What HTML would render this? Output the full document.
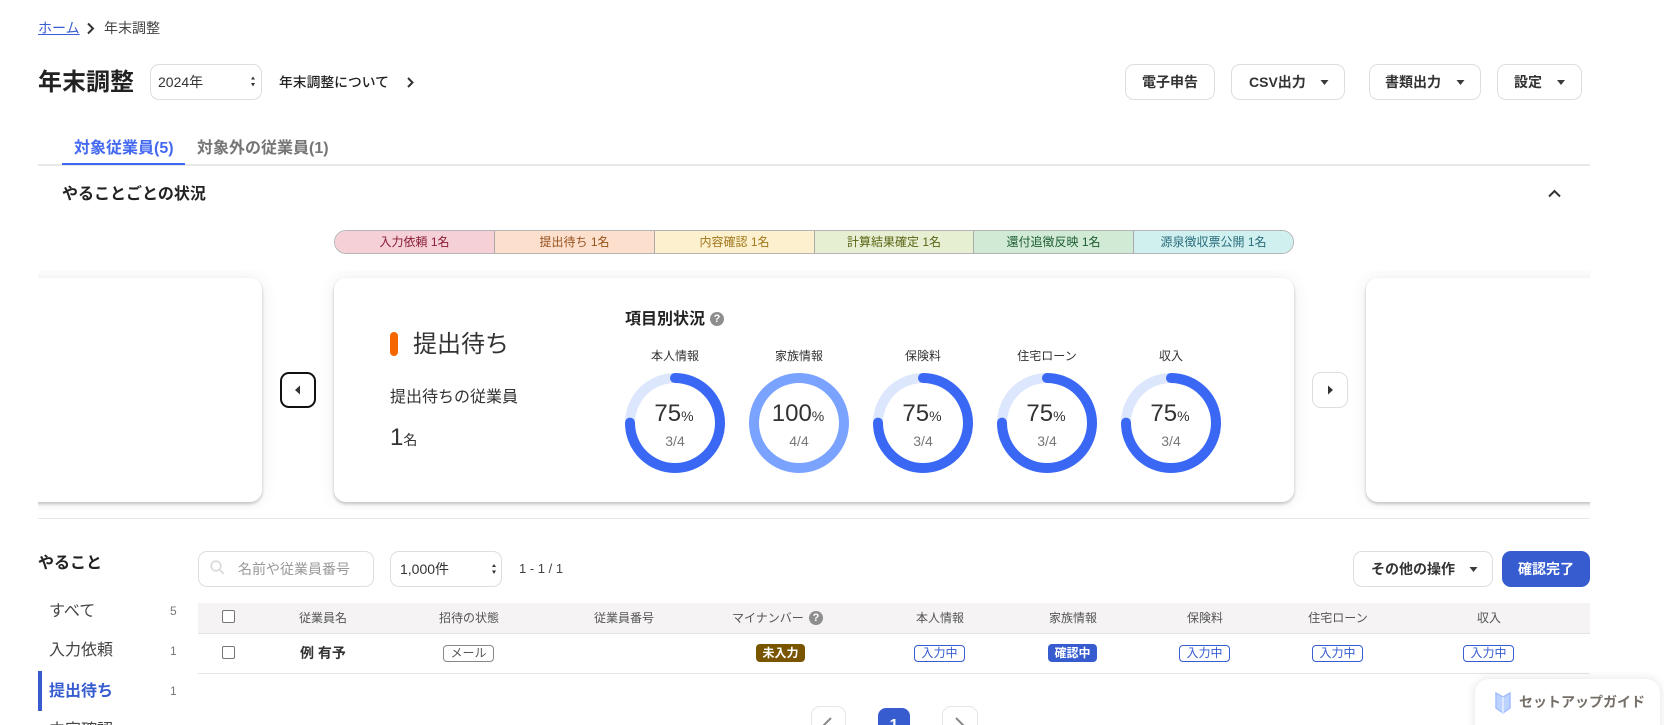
<!DOCTYPE html>
<html lang="ja">
<head>
<meta charset="utf-8">
<title>年末調整</title>
<style>
html,body{margin:0;padding:0;background:#fff;width:1664px;height:725px;overflow:hidden;}
#p{position:relative;width:1664px;height:725px;overflow:hidden;font-family:"Liberation Sans","Noto Sans CJK JP",sans-serif;color:#333;font-size:14px;background:#fff;}
.t{position:absolute;white-space:nowrap;line-height:20px;height:20px;}
.c{transform:translateX(-50%);}
.b{font-weight:700;}
.box{position:absolute;box-sizing:border-box;background:#fff;border:1px solid #dedede;border-radius:9px;}
.blue{background:#365cd0;}
.card{position:absolute;top:8px;height:224px;background:#fff;border-radius:12px;box-shadow:0 2px 3px rgba(0,0,0,.22),0 0 18px rgba(0,0,0,.07);}
.seg{position:absolute;top:0;height:22px;line-height:22px;text-align:center;font-size:12px;box-sizing:border-box;white-space:nowrap;}
.th{font-size:12px;color:#555;top:608px;}
.tag{position:absolute;box-sizing:border-box;height:17px;top:645px;line-height:15px;font-size:12px;text-align:center;border-radius:4px;background:#fff;border:1px solid #365cd0;color:#365cd0;}
.tag.f{top:644px;height:18px;line-height:18px;border:0;color:#fff;font-weight:700;}
.lab{font-size:12px;top:346px;color:#333;}
.pct{top:402px;font-size:24px;line-height:24px;height:24px;color:#333;}
.pct span{font-size:14px;}
.fr{top:431px;font-size:14px;color:#777;}
svg{position:absolute;overflow:visible;}
.q{position:absolute;width:14px;height:14px;border-radius:50%;background:#8e8e8e;color:#fff;font-size:11px;font-weight:700;line-height:14px;text-align:center;}
.cb{position:absolute;box-sizing:border-box;width:13px;height:13px;left:222px;border:1px solid #767676;border-radius:2px;background:#fff;}
.nav{font-size:16px;left:49px;color:#444;}
.cnt{font-size:12px;left:170px;color:#777;}
</style>
</head>
<body>
<div id="p">

<!-- breadcrumb -->
<a class="t" style="left:38px;top:18px;color:#3a5fd0;text-decoration:underline;">ホーム</a>
<svg style="left:0;top:0" width="1" height="1"><polyline points="88,23.500 93,28.500 88,33.500" fill="none" stroke="#333" stroke-width="2"/></svg>
<div class="t" style="left:104px;top:18px;color:#444;">年末調整</div>

<!-- title row -->
<div class="t b" style="left:38px;top:70px;font-size:24px;line-height:26px;height:26px;color:#222;">年末調整</div>
<div class="box" style="left:150px;top:64px;width:112px;height:36px;"></div>
<div class="t" style="left:158px;top:72px;color:#333;">2024年</div>
<svg style="left:0;top:0" width="1" height="1"><path d="M251 79.500h4l-2-3zM251 83h4l-2 3.500z" fill="#333"/></svg>
<div class="t" style="left:279px;top:73px;color:#222;font-weight:500;font-size:13.800px;">年末調整について</div>
<svg style="left:0;top:0" width="1" height="1"><polyline points="408,78 412.500,82.500 408,87" fill="none" stroke="#333" stroke-width="2"/></svg>

<div class="box" style="left:1125px;top:64px;width:90px;height:36px;"></div>
<div class="t b" style="left:1142px;top:72px;color:#333;">電子申告</div>
<div class="box" style="left:1231px;top:64px;width:114px;height:36px;"></div>
<div class="t b" style="left:1249px;top:72px;color:#333;">CSV出力</div>
<div class="box" style="left:1369px;top:64px;width:112px;height:36px;"></div>
<div class="t b" style="left:1385px;top:72px;color:#333;">書類出力</div>
<div class="box" style="left:1497px;top:64px;width:85px;height:36px;"></div>
<div class="t b" style="left:1514px;top:72px;color:#333;">設定</div>
<svg style="left:0;top:0" width="1" height="1"><path d="M1320.500 80h8l-4 5zM1456.500 80h8l-4 5zM1557 80h8l-4 5z" fill="#3a3a3a"/></svg>

<!-- tabs -->
<div class="t b" style="left:74px;top:139px;font-size:16px;color:#4469f0;">対象従業員(5)</div>
<div class="t b" style="left:197px;top:139px;font-size:16px;color:#757575;">対象外の従業員(1)</div>
<div style="position:absolute;left:38px;top:164px;width:1552px;height:2px;background:#e8e8e8;"></div>
<div style="position:absolute;left:62px;top:163px;width:123px;height:2px;background:#3a68f5;"></div>

<!-- section header -->
<div class="t b" style="left:62px;top:185px;font-size:16px;color:#222;">やることごとの状況</div>
<svg style="left:0;top:0" width="1" height="1"><polyline points="1549,196.500 1554.500,191 1560,196.500" fill="none" stroke="#333" stroke-width="2"/></svg>

<!-- stepper -->
<div style="position:absolute;left:334px;top:230px;width:960px;height:24px;box-sizing:border-box;border:1px solid #b4b4b4;border-radius:12px;overflow:hidden;">
  <div class="seg" style="left:0;width:160px;background:#f5d0d6;color:#8a1c34;border-right:1px solid #aaa;">入力依頼 1名</div>
  <div class="seg" style="left:160px;width:160px;background:#fcdfcd;color:#96501a;border-right:1px solid #aaa;">提出待ち 1名</div>
  <div class="seg" style="left:320px;width:160px;background:#fdf0cf;color:#a0781a;border-right:1px solid #aaa;">内容確認 1名</div>
  <div class="seg" style="left:480px;width:159px;background:#e7efd3;color:#5a6414;border-right:1px solid #aaa;">計算結果確定 1名</div>
  <div class="seg" style="left:639px;width:160px;background:#d0ead6;color:#1d5c30;border-right:1px solid #aaa;">還付追徴反映 1名</div>
  <div class="seg" style="left:799px;width:159px;background:#cff0ef;color:#2a6c7c;">源泉徴収票公開 1名</div>
</div>

<!-- carousel -->
<div style="position:absolute;left:38px;top:270px;width:1552px;height:240px;overflow:hidden;">
  <div class="card" style="left:-200px;width:424px;"></div>
  <div class="card" style="left:296px;width:960px;"></div>
  <div class="card" style="left:1328px;width:960px;"></div>
</div>

<!-- carousel buttons -->
<div style="position:absolute;left:280px;top:372px;width:36px;height:36px;box-sizing:border-box;border:2px solid #111;border-radius:9px;background:#fff;"></div>
<div class="box" style="left:1312px;top:372px;width:36px;height:36px;"></div>
<svg style="left:0;top:0" width="1" height="1"><path d="M300 385.500v9l-5-4.500zM1328 385.500v9l5-4.500z" fill="#333"/></svg>

<!-- main card content -->
<div style="position:absolute;left:390px;top:332px;width:8px;height:24px;border-radius:4px;background:#f56600;"></div>
<div class="t" style="left:413px;top:330px;font-size:24px;line-height:30px;height:30px;color:#333;">提出待ち</div>
<div class="t" style="left:390px;top:388px;font-size:16px;color:#333;">提出待ちの従業員</div>
<div class="t" style="left:390px;top:426px;font-size:24px;line-height:24px;height:24px;color:#333;">1<span style="font-size:14px;">名</span></div>
<div class="t b" style="left:625px;top:310px;font-size:16px;color:#222;">項目別状況</div>
<div class="q" style="left:710px;top:312px;">?</div>

<svg style="left:0;top:0" width="1" height="1" fill="none" stroke-width="10">
  <g stroke="#dce6fd">
    <circle cx="675" cy="423" r="45"/><circle cx="923" cy="423" r="45"/><circle cx="1047" cy="423" r="45"/><circle cx="1171" cy="423" r="45"/>
  </g>
  <circle cx="799" cy="423" r="45" stroke="#7aa3ff"/>
  <g stroke="#3a68f5" stroke-linecap="round" stroke-dasharray="212.060 282.740">
    <circle cx="675" cy="423" r="45" transform="rotate(-90 675 423)"/>
    <circle cx="923" cy="423" r="45" transform="rotate(-90 923 423)"/>
    <circle cx="1047" cy="423" r="45" transform="rotate(-90 1047 423)"/>
    <circle cx="1171" cy="423" r="45" transform="rotate(-90 1171 423)"/>
  </g>
</svg>

<div class="t c lab" style="left:675px;">本人情報</div>
<div class="t c lab" style="left:799px;">家族情報</div>
<div class="t c lab" style="left:923px;">保険料</div>
<div class="t c lab" style="left:1047px;">住宅ローン</div>
<div class="t c lab" style="left:1171px;">収入</div>

<div class="t c pct" style="left:674px;">75<span>%</span></div>
<div class="t c pct" style="left:798px;">100<span>%</span></div>
<div class="t c pct" style="left:922px;">75<span>%</span></div>
<div class="t c pct" style="left:1046px;">75<span>%</span></div>
<div class="t c pct" style="left:1170px;">75<span>%</span></div>

<div class="t c fr" style="left:675px;">3/4</div>
<div class="t c fr" style="left:799px;">4/4</div>
<div class="t c fr" style="left:923px;">3/4</div>
<div class="t c fr" style="left:1047px;">3/4</div>
<div class="t c fr" style="left:1171px;">3/4</div>

<!-- divider -->
<div style="position:absolute;left:38px;top:518px;width:1552px;height:1px;background:#e8e8e8;"></div>

<!-- sidebar -->
<div class="t b" style="left:38px;top:554px;font-size:16px;color:#222;">やること</div>
<div class="t nav" style="top:602px;">すべて</div><div class="t cnt" style="top:601px;">5</div>
<div class="t nav" style="top:641px;">入力依頼</div><div class="t cnt" style="top:641px;">1</div>
<div style="position:absolute;left:38px;top:671px;width:4px;height:40px;background:#365cd0;"></div>
<div class="t nav b" style="top:682px;color:#365cd0;">提出待ち</div><div class="t cnt" style="top:681px;">1</div>
<div class="t nav" style="top:721px;">内容確認</div>

<!-- toolbar -->
<div class="box" style="left:198px;top:551px;width:176px;height:36px;"></div>
<svg style="left:0;top:0" width="1" height="1" fill="none" stroke="#dcdcdc" stroke-width="1.800"><circle cx="216" cy="566" r="4.800"/><path d="M219.500 569.500l4.500 4.500"/></svg>
<div class="t" style="left:238px;top:559px;color:#999;">名前や従業員番号</div>
<div class="box" style="left:390px;top:551px;width:112px;height:36px;"></div>
<div class="t" style="left:400px;top:559px;color:#333;">1,000件</div>
<svg style="left:0;top:0" width="1" height="1"><path d="M492 567h4l-2-3zM492 570.500h4l-2 3.500z" fill="#333"/></svg>
<div class="t" style="left:519px;top:559px;font-size:13px;color:#444;">1 - 1 / 1</div>
<div class="box" style="left:1353px;top:551px;width:140px;height:36px;"></div>
<div class="t b" style="left:1371px;top:559px;color:#333;">その他の操作</div>
<svg style="left:0;top:0" width="1" height="1"><path d="M1469.500 567h8l-4 5z" fill="#3a3a3a"/></svg>
<div class="blue" style="position:absolute;left:1502px;top:551px;width:88px;height:36px;border-radius:9px;"></div>
<div class="t b" style="left:1518px;top:559px;color:#fff;">確認完了</div>

<!-- table -->
<div style="position:absolute;left:198px;top:603px;width:1392px;height:31px;box-sizing:border-box;background:#f5f3f3;border-bottom:1px solid #e4e4e4;"></div>
<div style="position:absolute;left:198px;top:673px;width:1392px;height:1px;background:#e4e4e4;"></div>
<div class="cb" style="top:610px;"></div>
<div class="cb" style="top:646px;"></div>
<div class="t c th" style="left:323px;">従業員名</div>
<div class="t c th" style="left:469px;">招待の状態</div>
<div class="t c th" style="left:624px;">従業員番号</div>
<div class="t th" style="left:732px;">マイナンバー</div>
<div class="q" style="left:809px;top:611px;">?</div>
<div class="t c th" style="left:940px;">本人情報</div>
<div class="t c th" style="left:1073px;">家族情報</div>
<div class="t c th" style="left:1205px;">保険料</div>
<div class="t c th" style="left:1338px;">住宅ローン</div>
<div class="t c th" style="left:1489px;">収入</div>

<div class="t b" style="left:300px;top:643px;color:#333;">例 有予</div>
<div class="tag" style="left:443px;width:51px;border-color:#888;color:#555;">メール</div>
<div class="tag f" style="left:756px;width:49px;background:#7a5500;">未入力</div>
<div class="tag" style="left:914px;width:51px;">入力中</div>
<div class="tag f" style="left:1048px;width:49px;background:#365cd0;">確認中</div>
<div class="tag" style="left:1179px;width:51px;">入力中</div>
<div class="tag" style="left:1312px;width:51px;">入力中</div>
<div class="tag" style="left:1463px;width:51px;">入力中</div>

<!-- pagination -->
<div class="box" style="left:811px;top:706px;width:35px;height:36px;border-color:#e6e6e6;"></div>
<div class="blue" style="position:absolute;left:878px;top:708px;width:32px;height:34px;border-radius:8px;"></div>
<div class="t c b" style="left:894px;top:716px;font-size:16px;color:#fff;">1</div>
<div class="box" style="left:942px;top:706px;width:36px;height:36px;border-color:#e6e6e6;"></div>
<svg style="left:0;top:0" width="1" height="1"><path d="M831 718l-8 8 8 8M956 718l8 8-8 8" fill="none" stroke="#888" stroke-width="2"/></svg>

<!-- setup guide -->
<div style="position:absolute;left:1475px;top:679px;width:185px;height:60px;background:#fff;border-radius:14px;box-shadow:0 0 10px rgba(0,0,0,.12);"></div>
<svg style="left:0;top:0" width="1" height="1"><path d="M1496 693l7 4 7-4v15l-7 5-7-5z" fill="#bcd2ff" stroke="#a4bfff" stroke-width="1.500"/><path d="M1503 697v16" stroke="#e8f0ff" stroke-width="1.500"/></svg>
<div class="t b" style="left:1519px;top:692px;color:#756f68;">セットアップガイド</div>

</div>
</body>
</html>
